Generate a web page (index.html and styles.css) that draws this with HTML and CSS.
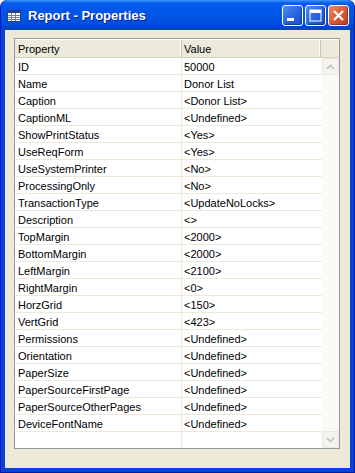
FILE: index.html
```html
<!doctype html>
<html lang="en">

<head>
  <meta charset="UTF-8">
  <title>Report - Properties</title>
  <link rel="stylesheet" href="styles.css">
</head>

<body>
  <div class="window">
    <div class="titlebar">
      <svg class="app-icon" width="14" height="12" viewBox="0 0 14 12">
        <rect x="0.5" y="0.5" width="13" height="11" fill="#fff" stroke="#2b3f8e" />
        <rect x="1" y="1" width="12" height="2" fill="#2b3f8e" />
        <path d="M1 5.5h12M1 7.5h12M1 9.5h12M4.5 3v8M8.5 3v8" stroke="#6b7fb8" stroke-width="1" />
      </svg>
      <span class="title">Report - Properties</span>
      <div class="controls">
        <div class="btn">
          <svg width="21" height="21" viewBox="0 0 21 21">
            <rect x="5" y="13" width="7" height="3" fill="#fff" />
          </svg>
        </div>
        <div class="btn">
          <svg width="21" height="21" viewBox="0 0 21 21">
            <rect x="5" y="5" width="11" height="11" fill="none" stroke="#fff" stroke-width="1" />
            <rect x="5" y="5" width="11" height="3" fill="#fff" />
          </svg>
        </div>
        <div class="btn close">
          <svg width="21" height="21" viewBox="0 0 21 21">
            <path d="M6 6l9 9M15 6l-9 9" stroke="#fff" stroke-width="2.2" />
          </svg>
        </div>
      </div>
    </div>

    <div class="client">
      <div class="grid">
        <div class="header">
          <div class="hcell name">Property</div>
          <div class="hcell value">Value</div>
          <div class="hcell spare"></div>
        </div>
        <div class="body">
          <div class="rows">
            <div class="row"><div class="cell name">ID</div><div class="cell value">50000</div></div>
            <div class="row"><div class="cell name">Name</div><div class="cell value">Donor List</div></div>
            <div class="row"><div class="cell name">Caption</div><div class="cell value">&lt;Donor List&gt;</div></div>
            <div class="row"><div class="cell name">CaptionML</div><div class="cell value">&lt;Undefined&gt;</div></div>
            <div class="row"><div class="cell name">ShowPrintStatus</div><div class="cell value">&lt;Yes&gt;</div></div>
            <div class="row"><div class="cell name">UseReqForm</div><div class="cell value">&lt;Yes&gt;</div></div>
            <div class="row"><div class="cell name">UseSystemPrinter</div><div class="cell value">&lt;No&gt;</div></div>
            <div class="row"><div class="cell name">ProcessingOnly</div><div class="cell value">&lt;No&gt;</div></div>
            <div class="row"><div class="cell name">TransactionType</div><div class="cell value">&lt;UpdateNoLocks&gt;</div></div>
            <div class="row"><div class="cell name">Description</div><div class="cell value">&lt;&gt;</div></div>
            <div class="row"><div class="cell name">TopMargin</div><div class="cell value">&lt;2000&gt;</div></div>
            <div class="row"><div class="cell name">BottomMargin</div><div class="cell value">&lt;2000&gt;</div></div>
            <div class="row"><div class="cell name">LeftMargin</div><div class="cell value">&lt;2100&gt;</div></div>
            <div class="row"><div class="cell name">RightMargin</div><div class="cell value">&lt;0&gt;</div></div>
            <div class="row"><div class="cell name">HorzGrid</div><div class="cell value">&lt;150&gt;</div></div>
            <div class="row"><div class="cell name">VertGrid</div><div class="cell value">&lt;423&gt;</div></div>
            <div class="row"><div class="cell name">Permissions</div><div class="cell value">&lt;Undefined&gt;</div></div>
            <div class="row"><div class="cell name">Orientation</div><div class="cell value">&lt;Undefined&gt;</div></div>
            <div class="row"><div class="cell name">PaperSize</div><div class="cell value">&lt;Undefined&gt;</div></div>
            <div class="row"><div class="cell name">PaperSourceFirstPage</div><div class="cell value">&lt;Undefined&gt;</div></div>
            <div class="row"><div class="cell name">PaperSourceOtherPages</div><div class="cell value">&lt;Undefined&gt;</div></div>
            <div class="row"><div class="cell name">DeviceFontName</div><div class="cell value">&lt;Undefined&gt;</div></div>
            <div class="row filler"><div class="cell name"></div><div class="cell value"></div></div>
          </div>
          <div class="scrollbar">
            <div class="sbtn">
              <svg width="9" height="6" viewBox="0 0 9 6"><path d="M1 5l3.5-3.5L8 5" fill="none" stroke="#c5c2b2" stroke-width="1.6" /></svg>
            </div>
            <div class="track"></div>
            <div class="sbtn">
              <svg width="9" height="6" viewBox="0 0 9 6"><path d="M1 1l3.5 3.5L8 1" fill="none" stroke="#c5c2b2" stroke-width="1.6" /></svg>
            </div>
          </div>
        </div>
      </div>
    </div>
  </div>
</body>

</html>
```

FILE: styles.css
```css
* {
  margin: 0;
  padding: 0;
  box-sizing: border-box;
}

body {
  background-color: #fff;
  font-family: "Liberation Sans", Arial, sans-serif;
  font-size: 11px;
  color: #000;
}

.window {
  width: 355px;
  height: 473px;
  display: flex;
  flex-direction: column;
  background: #0843d8;
  border-radius: 7px 7px 0 0;
  padding: 0 4px 4px 4px;
  border-left: 1px solid #0019cf;
  border-right: 1px solid #001ea0;
  border-bottom: 1px solid #001ea0;
}

/* XP Luna title bar */
.titlebar {
  height: 30px;
  margin: 0 -4px;
  padding: 1px 5px 0 5px;
  display: flex;
  align-items: center;
  border-radius: 7px 7px 0 0;
  background: linear-gradient(to bottom, #3d95ff 0px, #0a5fe8 3px, #0058ee 6px, #0256e6 14px, #0051e0 22px, #0046c8 27px, #0043c0 30px);
}

.app-icon {
  margin: 0 7px 0 1px;
  flex: none;
}

.title {
  color: #fff;
  font-weight: bold;
  font-size: 13px;
  text-shadow: 1px 1px 0 #0a1e88;
  flex: 1;
}

.controls {
  display: flex;
  gap: 2px;
  margin-top: -1px;
}

.btn {
  width: 21px;
  height: 21px;
  border: 1px solid #fff;
  border-radius: 3px;
  background: linear-gradient(135deg, #4d8cf5 0%, #2663de 55%, #1a4fc4 100%);
  box-shadow: inset -1px -1px 1px rgba(0, 0, 60, 0.35);
  display: flex;
  align-items: center;
  justify-content: center;
}

.btn svg {
  margin: -1px;
}

.btn.close {
  background: linear-gradient(135deg, #e8896a 0%, #dd5a35 50%, #c4401c 100%);
}

.client {
  flex: 1;
  background: #ece9d8;
  padding: 8px 10px 19px 9px;
  display: flex;
}

.grid {
  flex: 1;
  display: flex;
  flex-direction: column;
  border: 1px solid #919b9c;
  background: #fff;
}

.header {
  height: 19px;
  display: flex;
  background: #ebeadb;
  border-top: 1px solid #fff;
  border-bottom: 1px solid #d6d2c2;
}

.hcell {
  padding: 3px 0 0 3px;
  border-right: 1px solid #c7c5b2;
  box-shadow: inset -1px 0 0 #fff;
}

.name {
  width: 167px;
  flex: none;
}

.value {
  flex: 1;
}

.hcell.value {
  padding-left: 2px;
}

.hcell.spare {
  width: 18px;
  flex: none;
  border-right: none;
  box-shadow: none;
}

.body {
  flex: 1;
  display: flex;
}

.rows {
  flex: 1;
  display: flex;
  flex-direction: column;
}

.row {
  height: 17px;
  display: flex;
  border-bottom: 1px solid #ece9d8;
}

.cell {
  padding: 3px 0 0 3px;
  white-space: nowrap;
}

.cell.name {
  border-right: 1px solid #ece9d8;
}

.cell.value {
  padding-left: 2px;
}

.row.filler {
  flex: 1;
  border-bottom: none;
}

.scrollbar {
  width: 17px;
  flex: none;
  display: flex;
  flex-direction: column;
  background: #fbfaf6;
}

.sbtn {
  height: 17px;
  border: 1px solid #e9e7de;
  border-radius: 2px;
  background: #f4f3ee;
  display: flex;
  align-items: center;
  justify-content: center;
}

.track {
  flex: 1;
}
```
